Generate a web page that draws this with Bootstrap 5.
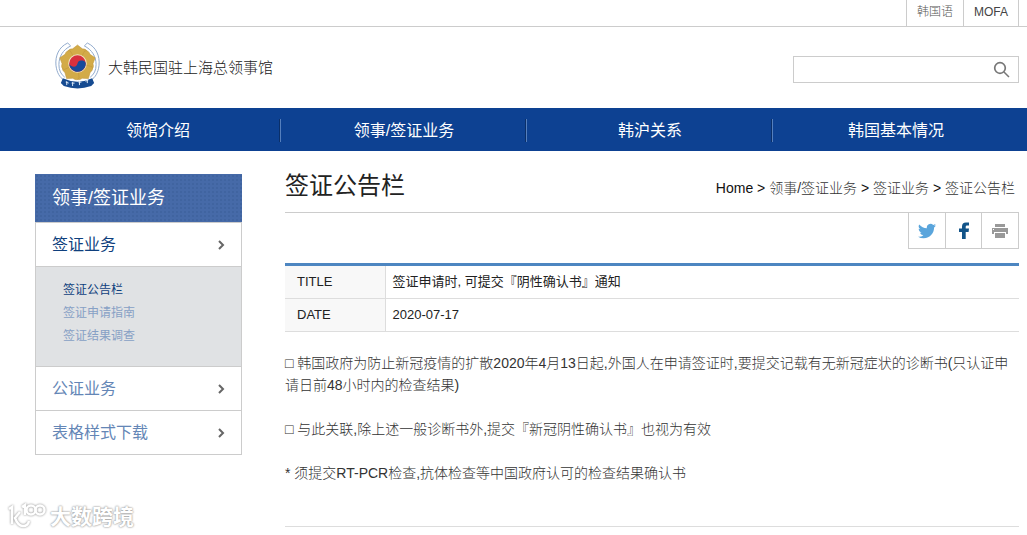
<!DOCTYPE html>
<html lang="zh-CN">
<head>
<meta charset="utf-8">
<meta name="viewport" content="width=device-width, initial-scale=1">
<title>大韩民国驻上海总领事馆</title>
<link href="https://cdn.jsdelivr.net/npm/bootstrap@5.3.0/dist/css/bootstrap.min.css" rel="stylesheet">
<style>
  body { font-family: "Liberation Sans", "Noto Sans CJK SC", sans-serif; font-size: 14px; line-height: 22px; font-weight: 300; color: #333; background: #fff; }
  a { text-decoration: none; color: inherit; }
  .shell { padding-left: 35px; padding-right: 8px; }
  .top-bar { border-bottom: 1px solid #ccc; font-size: 12px; line-height: 24px; }
  .top-bar a { border-left: 1px solid #ccc; padding: 0 10px 2px; color: #555; }
  .top-bar a:last-child { border-right: 1px solid #ccc; font-weight: 400; color: #444; }
  .masthead { height: 81px; }
  .brand-name { font-size: 15px; color: #222; }
  .search-box { width: 226px; height: 27px; border: 1px solid #ccc; }
  .search-box input { font-size: 13px; box-shadow: none !important; }
  .main-nav { background: #0d4192; color: #fff; font-size: 16px; font-weight: 400; line-height: 23px; }
  .main-nav a { padding: 11px 0 9px; }
  .main-nav li:not(:last-child) { background: linear-gradient(90deg, #0a2f69 50%, #557fbd 50%) right 11px / 2px 23px no-repeat; }
  .columns { padding-top: 23px; gap: 43px; }
  .side { width: 207px; }
  .side h2 { margin: 0; padding: 0 17px; font-size: 18px; font-weight: 400; line-height: 48px; color: #fff; background: radial-gradient(#4064a0 1px, transparent 1px) 0 0 / 4px 4px #466aa8; }
  .side-list { border: 1px solid #ccc; font-size: 16px; line-height: 43px; color: #6486b6; font-weight: 400; }
  .side-list > li + li { border-top: 1px solid #ccc; }
  .side-list > li > a { padding: 0 16px; }
  .side-list .on { color: #0f3f7d; }
  .sub-list { background: #e0e2e4; border-top: 1px solid #ccc; padding: 12px 27px 18px; font-size: 12px; line-height: 23px; color: #87a0c5; }
  .content-head { height: 39px; border-bottom: 1px solid #ccc; }
  .content-head h1 { font-size: 24px; line-height: 24px; font-weight: 400; margin: 0; color: #222; }
  .crumbs { padding: 3px 4px 0 0; color: #333; }
  .crumbs b { font-weight: 400; color: #111; }
  .share { border: 1px solid #ccc; border-top: 0; margin-bottom: 14px; }
  .share button { border: 0; background: #fff; width: 36px; height: 35px; padding: 0; display: flex; align-items: center; justify-content: center; }
  .share button + button { border-left: 1px solid #ccc; }
  .share button:last-child { width: 37px; }
  .info { border-top: 3px solid #4d86c1; width: 100%; font-size: 13px; line-height: 20px; color: #222; font-weight: 400; }
  .info th, .info td { height: 33px; padding: 6px 7px; border-bottom: 1px solid #ddd; font-weight: 400; }
  .info th { width: 100px; padding-left: 12px; background: #f8f8f8; border-right: 1px solid #ddd; }
  .article { padding: 20px 0 42px; border-bottom: 1px solid #ddd; }
  .article p { margin: 0 0 22px; }
  .article p:last-child { margin: 0; }
  .stamp { position: absolute; left: 8px; top: 503px; gap: 3px; color: #fff; font-size: 21px; line-height: 28px; font-weight: 700; text-shadow: 0 0 2px #999, 0 0 2px #aaa; }
  .stamp svg { filter: drop-shadow(0 0 1px #888); }
</style>
</head>
<body>
<div class="top-bar shell d-flex justify-content-end"><a href="#">韩国语</a><a href="#">MOFA</a></div>

<header class="masthead shell d-flex align-items-center justify-content-between">
  <a href="#" class="d-flex align-items-center gap-2 ms-3 ps-1">
    <svg class="mb-1" width="45" height="47" viewBox="0 0 46 48" aria-hidden="true">
      <g fill="none" stroke="#8fa9cc" stroke-width="1">
        <path d="M13 1C4 5 0 14 1 24c1 8 4 12 8 15M16 4C8 8 4 15 4 23c0 6 2 10 6 13M13 1l3 3M33 1c9 4 13 13 12 23-1 8-4 12-8 15M30 4c8 4 12 11 12 19 0 6-2 10-6 13M33 1l-3 3"/>
      </g>
      <g fill="#d3ab48" stroke="#bd943b" stroke-width=".5">
        <path id="petal" d="M23 22L13 11q0-4 5-4l5-4 5 4q5 0 5 4z"/>
        <use href="#petal" transform="rotate(72 23 22)"/><use href="#petal" transform="rotate(144 23 22)"/><use href="#petal" transform="rotate(216 23 22)"/><use href="#petal" transform="rotate(288 23 22)"/>
      </g>
      <circle cx="23" cy="22" r="9.500" fill="#f0e2c2"/>
      <circle cx="23" cy="22" r="8.500" fill="#d8303d"/>
      <path d="M14.500 22a8.500 8.500 0 0 0 17 0a4.250 4 0 0 0-8.500 0a4.250 4 0 0 1-8.500 0z" transform="rotate(12 23 22)" fill="#174a9b"/>
      <path d="M8 37q15 7 30 0l2 5-3 3q-14 5-28 0l-3-3z" fill="#164b91"/>
      <path d="M11 41l3 1m-2-2v4m5-2h3m-2-1v4m6-4h3m-2-1v4m6-4l3-1m-1-1v4" stroke="#dce8f6" fill="none"/>
    </svg>
    <span class="brand-name">大韩民国驻上海总领事馆</span>
  </a>
  <form class="search-box d-flex mt-1" role="search">
    <input type="search" class="form-control border-0 rounded-0 py-0" aria-label="搜索">
    <button type="button" class="btn p-0 pe-2 d-flex align-items-center border-0" aria-label="搜索"><svg width="17" height="17" viewBox="0 0 17 17" fill="none" stroke="#777"><circle cx="7" cy="7" r="5.300" stroke-width="1.700"/><path d="M11 11l5 5" stroke-width="1.500"/></svg></button>
  </form>
</header>

<nav class="main-nav shell">
  <ul class="row g-0 list-unstyled mb-0 text-center">
    <li class="col-3"><a href="#" class="d-block">领馆介绍</a></li>
    <li class="col-3"><a href="#" class="d-block">领事/签证业务</a></li>
    <li class="col-3"><a href="#" class="d-block">韩沪关系</a></li>
    <li class="col-3"><a href="#" class="d-block">韩国基本情况</a></li>
  </ul>
</nav>

<div class="columns shell d-flex align-items-start">
  <aside class="side flex-shrink-0">
    <h2>领事/签证业务</h2>
    <ul class="side-list list-unstyled mb-0">
      <li><a href="#" class="on d-flex justify-content-between align-items-center">签证业务<svg width="8" height="10" viewBox="0 0 8 10" fill="none" stroke="#666" stroke-width="2"><path d="M2 1l4 4-4 4"/></svg></a>
        <ul class="sub-list list-unstyled">
          <li><a href="#" class="on">签证公告栏</a></li>
          <li><a href="#">签证申请指南</a></li>
          <li><a href="#">签证结果调查</a></li>
        </ul>
      </li>
      <li><a href="#" class="d-flex justify-content-between align-items-center">公证业务<svg width="8" height="10" viewBox="0 0 8 10" fill="none" stroke="#666" stroke-width="2"><path d="M2 1l4 4-4 4"/></svg></a></li>
      <li><a href="#" class="d-flex justify-content-between align-items-center">表格样式下载<svg width="8" height="10" viewBox="0 0 8 10" fill="none" stroke="#666" stroke-width="2"><path d="M2 1l4 4-4 4"/></svg></a></li>
    </ul>
  </aside>

  <main class="flex-grow-1">
    <div class="content-head d-flex justify-content-between">
      <h1>签证公告栏</h1>
      <nav class="crumbs" aria-label="breadcrumb"><a href="#"><b>Home</b></a> <b>&gt;</b> <a href="#">领事/签证业务</a> <b>&gt;</b> <a href="#">签证业务</a> <b>&gt;</b> <a href="#">签证公告栏</a></nav>
    </div>
    <div class="d-flex justify-content-end">
      <div class="share d-flex">
        <button type="button" aria-label="Twitter"><svg width="18" height="16" viewBox="0 0 16 14"><path fill="#5aa5dc" d="M5 13.5c6 0 9.300-5 9.300-9.300v-.4A6.600 6.600 0 0 0 16 2.100a6.500 6.500 0 0 1-1.900.5A3.300 3.300 0 0 0 15.600.8a6.500 6.500 0 0 1-2.100.8 3.300 3.300 0 0 0-5.600 3A9.300 9.300 0 0 1 1.100 1.200a3.300 3.300 0 0 0 1 4.300 3.300 3.300 0 0 1-1.500-.4c0 1.600 1.100 3 2.600 3.300a3.300 3.300 0 0 1-1.500.1 3.300 3.300 0 0 0 3.100 2.200A6.600 6.600 0 0 1 0 12a9.300 9.300 0 0 0 5 1.500"/></svg></button>
        <button type="button" aria-label="Facebook"><svg width="10" height="18" viewBox="0 0 10 18"><path fill="#125489" d="M3 17V10H0V6.500h3V4.500Q3 .5 7 .5h3v3H8q-1.300 0-1.300 1.300v1.700H10L9.600 10H6.700v7z"/></svg></button>
        <button type="button" aria-label="打印"><svg width="16" height="16" viewBox="0 0 16 16" fill="#999"><path d="M3 1h10v3H3zM0 5h16v6h-2V9H2v2H0zM3 10h10v5H3z"/><path d="M1 6h1v1H1z" fill="#fff"/></svg></button>
      </div>
    </div>
    <table class="info">
      <tbody>
        <tr><th scope="row">TITLE</th><td>签证申请时, 可提交『阴性确认书』通知</td></tr>
        <tr><th scope="row">DATE</th><td>2020-07-17</td></tr>
      </tbody>
    </table>
    <article class="article">
      <p>□ 韩国政府为防止新冠疫情的扩散2020年4月13日起,外国人在申请签证时,要提交记载有无新冠症状的诊断书(只认证申请日前48小时内的检查结果)</p>
      <p>□ 与此关联,除上述一般诊断书外,提交『新冠阴性确认书』也视为有效</p>
      <p>* 须提交RT-PCR检查,抗体检查等中国政府认可的检查结果确认书</p>
    </article>
  </main>
</div>

<div class="stamp d-flex align-items-center">
  <svg width="39" height="28" viewBox="0 0 39 28" fill="none" stroke="#fff" stroke-width="2.500"><path d="M1 6l3-2v17M12 9l-5 6q3 8 8 8 5 0 6-5M14 4l3-2v10"/><circle cx="23" cy="7" r="4.500"/><circle cx="32" cy="7" r="4.500"/></svg>
  <span>大数跨境</span>
</div>
<script src="https://cdn.jsdelivr.net/npm/bootstrap@5.3.0/dist/js/bootstrap.bundle.min.js"></script>
</body>
</html>
